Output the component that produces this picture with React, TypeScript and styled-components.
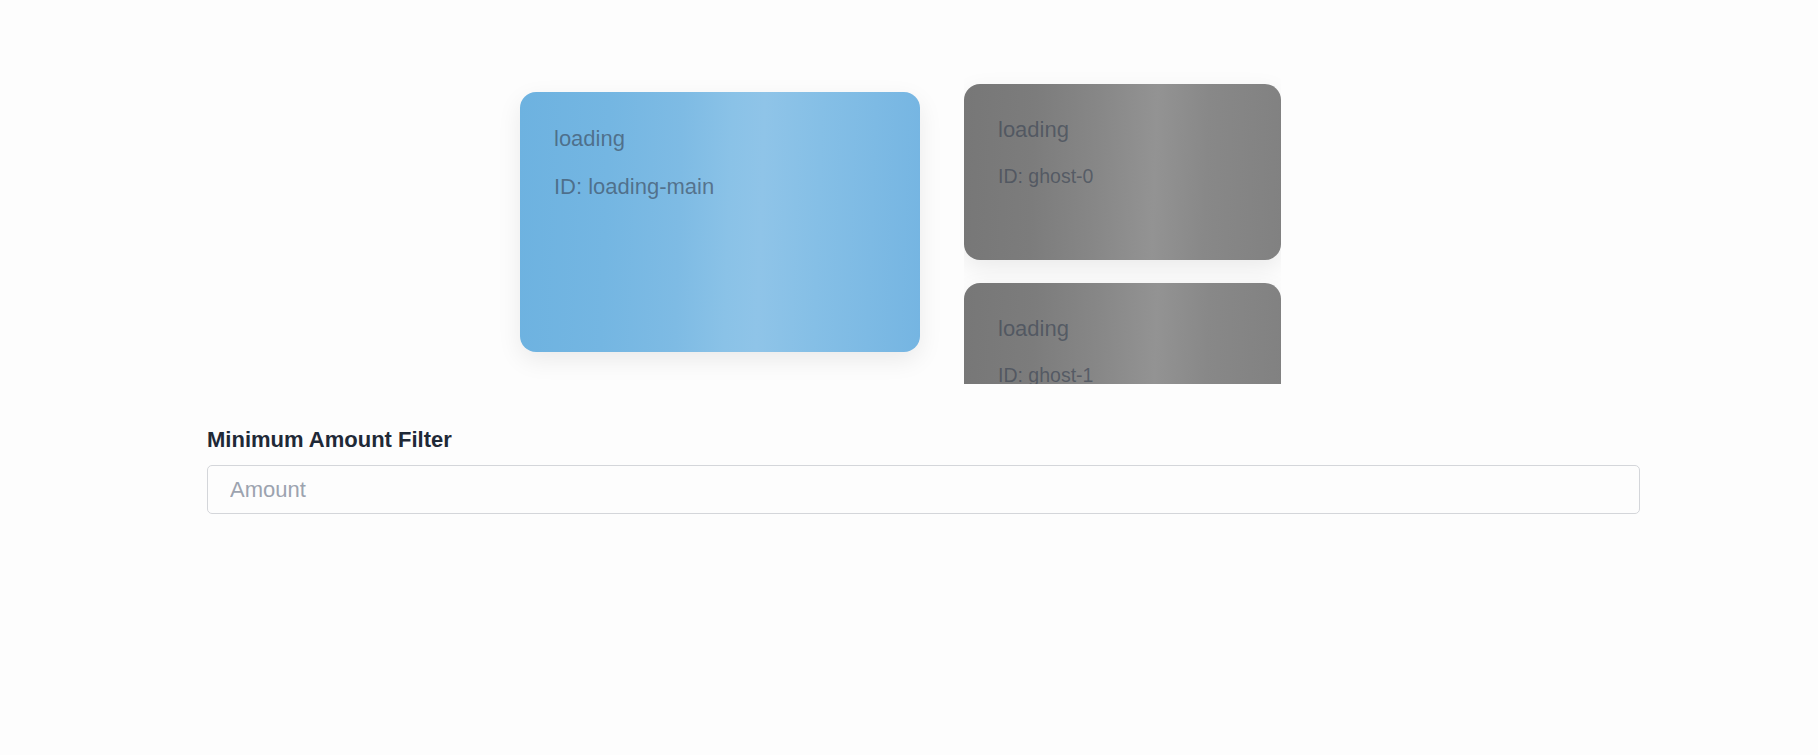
import React from "react";
import styled, { createGlobalStyle } from "styled-components";

const GlobalStyle = createGlobalStyle`
  html, body {
    margin: 0;
    padding: 0;
    background: #fdfdfd;
    font-family: "Liberation Sans", Arial, sans-serif;
  }
  * { box-sizing: border-box; }
`;

const Page = styled.main`
  padding-top: 72px;
`;

const Stage = styled.section`
  display: flex;
  align-items: flex-start;
  gap: 44px;
  padding-left: 520px;
`;

const Card = styled.div<{ $variant: "main" | "ghost" }>`
  flex: none;
  width: ${(p) => (p.$variant === "main" ? "400px" : "317px")};
  height: ${(p) => (p.$variant === "main" ? "260px" : "176px")};
  margin-top: ${(p) => (p.$variant === "main" ? "20px" : "0")};
  border-radius: 16px;
  padding: ${(p) => (p.$variant === "main" ? "34px 34px" : "33px 34px")};
  color: rgba(55, 65, 81, 0.6);
  background: ${(p) =>
    p.$variant === "main"
      ? "linear-gradient(92deg, #6db2e0 0%, #74b6e2 22%, #7ebbe4 40%, #8ac2e7 52%, #8fc4e8 60%, #85bfe6 74%, #75b5e2 100%)"
      : "linear-gradient(92deg, #777777 0%, #7c7c7c 22%, #878787 42%, #939393 60%, #888888 76%, #818181 100%)"};
  box-shadow: 0 8px 24px rgba(0, 0, 0, 0.08);
`;

const CardTitle = styled.p`
  margin: 0 0 22px;
  font-size: 22px;
  line-height: normal;
`;

const CardId = styled.p<{ $size: number }>`
  margin: 0;
  font-size: ${(p) => p.$size}px;
  line-height: normal;
`;

const GhostColumn = styled.div`
  display: flex;
  flex-direction: column;
  gap: 23px;
  height: 312px;
  padding-top: 12px;
  overflow: hidden;
`;

const Filter = styled.section`
  margin: 43px 0 0 207px;
  width: 1433px;
  display: flex;
  flex-direction: column;
  gap: 12px;
`;

const Label = styled.label`
  font-size: 22px;
  font-weight: 700;
  color: #1f2937;
  line-height: normal;
`;

const AmountInput = styled.input`
  height: 49px;
  width: 100%;
  border: 1px solid #d4d6da;
  border-radius: 5px;
  padding: 0 22px;
  font-family: "Liberation Sans", Arial, sans-serif;
  font-size: 22px;
  color: #1f2937;
  background: #fdfdfd;
  outline: none;
  &::placeholder {
    color: #9ca3af;
  }
`;

export default function App() {
  const ghosts = ["ghost-0", "ghost-1"];
  return (
    <>
      <GlobalStyle />
      <Page>
        <Stage>
          <Card $variant="main">
            <CardTitle>loading</CardTitle>
            <CardId $size={22}>ID: loading-main</CardId>
          </Card>
          <GhostColumn>
            {ghosts.map((g) => (
              <Card key={g} $variant="ghost">
                <CardTitle>loading</CardTitle>
                <CardId $size={19.5}>ID: {g}</CardId>
              </Card>
            ))}
          </GhostColumn>
        </Stage>
        <Filter>
          <Label htmlFor="amount">Minimum Amount Filter</Label>
          <AmountInput id="amount" type="number" placeholder="Amount" />
        </Filter>
      </Page>
    </>
  );
}
